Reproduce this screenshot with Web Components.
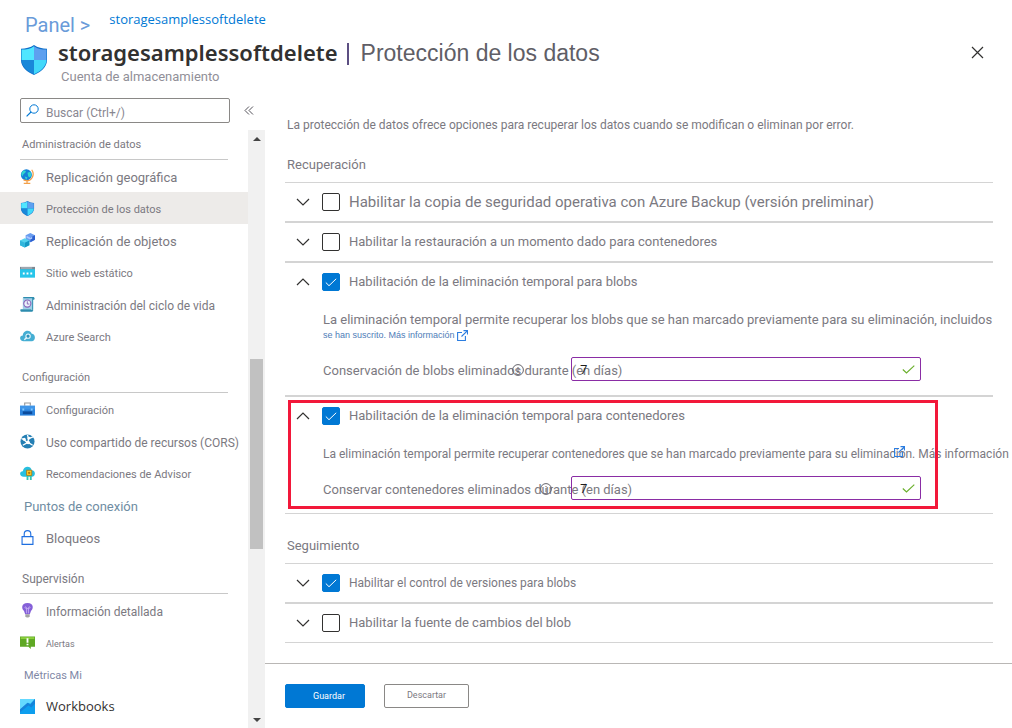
<!DOCTYPE html>
<html lang="es">
<head>
<meta charset="utf-8">
<meta name="viewport" content="width=device-width, initial-scale=1">
<title>storagesamplessoftdelete | Protección de los datos</title>
<style>
  :root {
    --text: #7b7981;
    --dark: #323130;
    --blue: #0078d4;
    --line: #d4d4d4;
    --font-ui: "Open Sans", "Noto Sans", sans-serif;
    --font-alt: "Liberation Sans", Arial, sans-serif;
  }
  body {
    margin: 0;
    background: #fff;
    color: var(--text);
    font-family: Roboto, "Liberation Sans", sans-serif;
    font-size: 13px;
    line-height: 16px;
    overflow: hidden;
  }
</style>
</head>
<body>
<storage-blade>
  <blade-header slot="header"></blade-header>

  <side-nav slot="nav">
    <nav-group heading="Administración de datos" size="11">
      <nav-item icon="globe" size="13">Replicación geográfica</nav-item>
      <nav-item icon="shield" size="11" selected>Protección de los datos</nav-item>
      <nav-item icon="cubes" size="13">Replicación de objetos</nav-item>
      <nav-item icon="web" size="11">Sitio web estático</nav-item>
      <nav-item icon="scroll" size="12">Administración del ciclo de vida</nav-item>
      <nav-item icon="cloudsearch" size="11">Azure Search</nav-item>
    </nav-group>
    <nav-group heading="Configuración" size="11">
      <nav-item icon="toolbox" size="11">Configuración</nav-item>
      <nav-item icon="cors" size="12">Uso compartido de recursos (CORS)</nav-item>
      <nav-item icon="advisor" size="11">Recomendaciones de Advisor</nav-item>
      <nav-item size="13" tone="#6f8da3">Puntos de conexión</nav-item>
      <nav-item icon="lock" size="13">Bloqueos</nav-item>
    </nav-group>
    <nav-group heading="Supervisión" size="12">
      <nav-item icon="bulb" size="12">Información detallada</nav-item>
      <nav-item icon="alert" size="9">Alertas</nav-item>
      <nav-item size="11" tone="#7f88a6">Métricas Mi</nav-item>
      <nav-item icon="workbooks" size="13" strong>Workbooks</nav-item>
    </nav-group>
  </side-nav>

  <protection-form slot="content">
    <p slot="intro">La protección de datos ofrece opciones para recuperar los datos cuando se modifican o eliminan por error.</p>
    <option-group heading="Recuperación">
      <option-row label="Habilitar la copia de seguridad operativa con Azure Backup (versión preliminar)" size="15"></option-row>
      <option-row label="Habilitar la restauración a un momento dado para contenedores"></option-row>
      <option-row label="Habilitación de la eliminación temporal para blobs" checked open>
        <option-note more="se han suscrito. Más información" size="13">La eliminación temporal permite recuperar los blobs que se han marcado previamente para su eliminación, incluidos</option-note>
        <days-field label="Conservación de blobs eliminados durante (en días)" value="7" style="--info: 189px"></days-field>
      </option-row>
      <option-row label="Habilitación de la eliminación temporal para contenedores" checked open callout>
        <option-note size="12">La eliminación temporal permite recuperar contenedores que se han marcado previamente para su eliminación. Más información</option-note>
        <days-field label="Conservar contenedores eliminados durante (en días)" value="7" style="--info: 217px"></days-field>
      </option-row>
    </option-group>
    <option-group heading="Seguimiento">
      <option-row label="Habilitar el control de versiones para blobs" size="12" checked></option-row>
      <option-row label="Habilitar la fuente de cambios del blob"></option-row>
    </option-group>
  </protection-form>

  <action-bar slot="footer"></action-bar>
</storage-blade>

<script>
const icons = {
  shield: `<path fill="#0f6fc9" d="M8 0c2 1.400 4.500 2 7 2v6c0 4-3.500 6.500-7 8-3.500-1.500-7-4-7-8V2c2.500 0 5-.6 7-2z"/>
    <path fill="#50e6ff" d="M8 .6v7.400H1.300V2.400C4 2.400 6 2 8 .6z"/><path fill="#5ea0ef" d="M8 .6v7.400h6.700V2.400C12 2.400 10 2 8 .6z"/>
    <path fill="#1988d9" d="M8 8v7.600C4.500 14 1.300 11.500 1.300 8z"/><path fill="#42d8fa" d="M8 8v7.600c3.500-1.600 6.700-4.100 6.700-7.600z"/>`,
  globe: `<circle cx="6.800" cy="6.200" r="5.900" fill="#1580d8"/><path fill="#2fd5cf" d="M3 2c2-1 4 0 3 1.500S3.500 5 3 7 1.500 6 1.300 5zM8 4l3-1 1.300 3-1.500 3-2-1zM5 8l3 1-1.500 2.700z"/>
    <path d="M12.500.8c3.700 5.500 0 11.700-5.500 11.700-1.500 0-2.500-.4-3.200-1" fill="none" stroke="#f2a04a" stroke-width="1.300"/><path d="M7.500 12.500V15M4 15.300h7" stroke="#f2a04a" stroke-width="1.300"/>`,
  cubes: `<path fill="#6a9df0" d="M11 0l5 2.300v5L11 9.800 6 7.300v-5z"/><path fill="#2c60cf" d="M11 4.800l5-2.500v5l-5 2.500z"/><path fill="#a9c8ff" d="M7 3l4 2 2-1v2l-2 1-4-2z"/>
    <path fill="#54d3ee" d="M5 5.500L10 8v5l-5 2.500L0 13V8z"/><path fill="#1598c4" d="M5 10.500L10 8v5l-5 2.500z"/><path fill="#30b6dc" d="M5 10.500L0 8v5l5 2.500z"/>`,
  web: `<path fill="#28c5ea" d="M0 4h16v9.500H0z"/><path fill="#7c8791" d="M0 2h16v2.500H0z"/><path fill="#d8dde0" d="M1 2.800h12v.8H1z"/><path fill="#fff" d="M3 8h2v2H3zM7 8h2v2H7zM11 8h2v2h-2z"/>`,
  scroll: `<path fill="#9fd0e8" d="M3 1h11v12H3z"/><path fill="#2d8cae" d="M3 0h11c2 0 2 3 .6 3H13V1.300H4zM1 13h11c1 0 1 2.800 2 2.800H2c-2 0-2-2.800-1-2.800zM13 3h1v12h-1z"/>
    <circle cx="7.800" cy="7" r="3.800" fill="#e9f2fb" stroke="#8a63b8" stroke-width="1.200"/><path d="M7.800 4.500V7.500H10" fill="none" stroke="#8a63b8"/>`,
  cloudsearch: `<path fill="#45aed3" d="M4 13c-5 0-5-6-1-6 0-6 8-7 9.500-2 4.500 0 4.500 8 0 8z"/><circle cx="8.600" cy="7.600" r="2.300" fill="#2b90ba" stroke="#e6f6fc" stroke-width="1.200"/><path d="M7 9.300L4.600 11.500" stroke="#e6f6fc" stroke-width="1.500"/>`,
  toolbox: `<path d="M5 4V1h6v3" fill="none" stroke="#9a9a9a" stroke-width="1.200"/><path fill="#3f95e8" d="M0 3.800h16v5H0z"/><path fill="#2b83dd" d="M0 8h16v6.500H0z"/><path fill="#0b4b9c" d="M3 10h10v3H3z"/><path fill="#82c7ff" d="M2.500 7h2v2h-2zM11.500 7h2v2h-2z"/>`,
  cors: `<circle cx="8" cy="8" r="7.500" fill="#247fb4"/><path d="M1.500 5c4 0 4 4 7 4M8 1l1 4 5-2M8.500 9l5 3M8.500 9L3 12M9 5L8.500 9" stroke="#fff" stroke-width="1.400" fill="none"/><circle cx="4.500" cy="5.500" r="1.600" fill="#fff"/><circle cx="8.700" cy="9" r="1.900" fill="#fff"/><circle cx="9.500" cy="4.500" r="1.500" fill="#fff"/>`,
  advisor: `<path fill="#27bfe0" d="M4 11.500c-5 0-5-6-1-6 1-6 8.500-6 9.500-1 4.500 0 4.500 7 0 7z"/><path fill="#32c8b6" d="M7 9h2v6H7zM10.500 9h2v6h-2z"/><path fill="#ffcb27" stroke="#a7730c" stroke-width=".8" d="M7 4.500h5.500V10H7z"/><circle cx="9.800" cy="7.300" r="1.300" fill="#b87907"/>`,
  lock: `<path d="M4.500 7V4.200a3.500 3.500 0 017 0V7M2.200 7h11.600v8.300H2.200z" fill="none" stroke="#1f6fe0" stroke-width="1.200"/>`,
  bulb: `<path fill="#8560d8" d="M8 0c7 0 6.500 6.500 3.700 8.500L10.500 12h-5L4.300 8.500C1.500 6.500 1 0 8 0z"/><path d="M7 11V6C5 6 5 4 6 4s1 2 1 2h2s0-2 1-2 1 2-1 2v5" fill="none" stroke="#cdb9f5" stroke-width=".8"/><path fill="#a3a3a3" d="M5.700 12h4.600v2L9 15.500H7L5.700 14z"/>`,
  alert: `<path fill="#5fa824" d="M0 1.500h16v11h-4.500V15L9 12.500H0z"/><path fill="#8bd03c" d="M.8 2.300h14.400v2H.8z"/><path fill="#fff" d="M7 3.500h2v4.700H7zM7 9.300h2v1.700H7z"/>`,
  workbooks: `<path fill="#0d9eee" d="M0 0h16v16H0z"/><path fill="#64d9ff" d="M0 0h16L11 5 8.500 4 0 12z"/><path fill="#1683da" d="M16 0v5l-4 4-3-2-9 7v-3l8-7 3 2z"/>`
};

const chevron = `<svg width="14" height="8" viewBox="0 0 14 8"><path d="M1 1l6 6 6-6" fill="none" stroke="#323130" stroke-width="1.200"/></svg>`;
const external = `<svg width="11" height="11" viewBox="0 0 11 11"><path d="M5 2.500H.6v8h7.800V6M6.500.6h4v4M10.300.8L4.500 6.500" fill="none" stroke="#2b7de0" stroke-width="1.100"/></svg>`;

class StorageBlade extends HTMLElement {
  constructor() {
    super();
    this.attachShadow({ mode: "open" }).innerHTML = `
      <style>
        :host {
          display: grid;
          grid-template-columns: 265px minmax(0, 1fr);
          grid-template-rows: 98px 1fr auto;
          grid-template-areas: "header header" "nav content" "nav footer";
          height: 100vh;
          overflow: hidden;
        }
        header { grid-area: header; }
        aside { grid-area: nav; min-height: 0; }
        main { grid-area: content; min-height: 0; overflow: hidden; }
        footer { grid-area: footer; }
      </style>
      <header><slot name="header"></slot></header>
      <aside><slot name="nav"></slot></aside>
      <main><slot name="content"></slot></main>
      <footer><slot name="footer"></slot></footer>`;
  }
}

class BladeHeader extends HTMLElement {
  constructor() {
    super();
    this.attachShadow({ mode: "open" }).innerHTML = `
      <style>
        :host { display: block; padding: 10px 28px 0 21px; }
        nav { display: flex; gap: 19px; height: 28px; padding-left: 4px; }
        a { color: var(--blue); text-decoration: none; font: 13px/18px var(--font-ui); }
        a.root { color: #699bd9; font: 20px/30px Roboto, sans-serif; }
        .bar { display: flex; align-items: flex-start; }
        .shield { width: 26px; height: 30px; margin: 7px 11px 0 0; }
        .titles { flex: 1; }
        h1 { display: flex; gap: 9px; margin: 0; color: var(--dark); font: 600 22px/28px "Noto Sans", var(--font-ui); white-space: nowrap; }
        h1 i { width: 2px; height: 22px; margin-top: 5px; background: #5c4f82; }
        h1 small { color: #605e66; font: 23px/30px var(--font-alt); margin-left: 3px; }
        p { margin: 1px 0 0 3px; line-height: 16px; color: #918f98; }
        button { border: 0; padding: 0; background: none; width: 13px; height: 13px; margin-top: 8px; }
        svg { display: block; }
      </style>
      <nav aria-label="Ruta">
        <a class="root" href="#panel">Panel &gt;</a>
        <a href="#cuenta">storagesamplessoftdelete</a>
      </nav>
      <div class="bar">
        <svg class="shield" viewBox="1 0 14 16" preserveAspectRatio="none">${icons.shield}</svg>
        <div class="titles">
          <h1>storagesamplessoftdelete <i></i> <small>Protección de los datos</small></h1>
          <p>Cuenta de almacenamiento</p>
        </div>
        <button aria-label="Cerrar"><svg width="13" height="13" viewBox="0 0 13 13"><path d="M1 1l11 11M12 1L1 12" stroke="#323130" stroke-width="1.200"/></svg></button>
      </div>`;
  }
}

class SideNav extends HTMLElement {
  constructor() {
    super();
    this.attachShadow({ mode: "open" }).innerHTML = `
      <style>
        :host { display: flex; flex-direction: column; height: 100%; }
        .search { display: flex; align-items: center; gap: 14px; flex: none; height: 25px; padding-left: 20px; margin-bottom: 7px; }
        label { display: flex; align-items: center; gap: 7px; box-sizing: border-box; width: 210px; height: 25px; padding: 0 5px; border: 1px solid #8a8886; border-radius: 2px; }
        input { flex: 1; min-width: 0; border: 0; outline: 0; padding: 4px 0 0; background: none; font: 12px/16px Roboto, sans-serif; color: var(--text); }
        input::placeholder { color: #898791; opacity: 1; }
        button { border: 0; padding: 0; background: none; }
        svg { display: block; flex: none; }
        .body { display: flex; flex: 1; min-height: 0; }
        nav { flex: 1; min-width: 0; overflow: hidden; }
        .track { display: grid; grid-template-rows: 17px 212px 190px 1fr 17px; justify-items: center; align-items: center; width: 17px; background: #f1f1f1; }
        .thumb { grid-row: 3; width: 13px; height: 100%; background: #c1c1c1; }
        .down { grid-row: 5; }
      </style>
      <div class="search">
        <label>
          <svg width="13" height="13" viewBox="0 0 13 13"><circle cx="8" cy="5" r="4.200" fill="none" stroke="#0078d4"/><path d="M5 8L.6 12.400" stroke="#0078d4" stroke-width="1.200"/></svg>
          <input type="text" placeholder="Buscar (Ctrl+/)" aria-label="Buscar">
        </label>
        <button aria-label="Contraer"><svg width="10" height="9" viewBox="0 0 10 9"><path d="M5 .5l-4 4 4 4M9 .5l-4 4 4 4" fill="none" stroke="#55535a"/></svg></button>
      </div>
      <div class="body">
        <nav><slot></slot></nav>
        <div class="track">
          <svg width="8" height="4" viewBox="0 0 8 4"><path d="M0 4l4-4 4 4z" fill="#444"/></svg>
          <div class="thumb"></div>
          <svg class="down" width="8" height="4" viewBox="0 0 8 4"><path d="M0 0l4 4 4-4z" fill="#444"/></svg>
        </div>
      </div>`;
  }
}

class NavGroup extends HTMLElement {
  connectedCallback() {
    this.attachShadow({ mode: "open" }).innerHTML = `
      <style>
        :host { display: block; padding-top: 11px; }
        :host(:first-of-type) { padding-top: 0; }
        h2 { margin: 0 20px; padding: 7px 2px 6px; border-bottom: 1px solid #c8c8c8; font-size: ${this.getAttribute("size")}px; font-weight: 400; line-height: 16px; }
      </style>
      <h2>${this.getAttribute("heading")}</h2>
      <slot></slot>`;
  }
}

class NavItem extends HTMLElement {
  connectedCallback() {
    const icon = icons[this.getAttribute("icon")];
    this.attachShadow({ mode: "open" }).innerHTML = `
      <style>
        :host { display: block; }
        :host([selected]) { background: #edebe9; }
        a { display: flex; align-items: center; gap: 11px; height: 32px; padding-left: ${icon ? 20 : 24}px; color: ${this.getAttribute("tone") || "inherit"}; font-size: ${this.getAttribute("size")}px; text-decoration: none; white-space: nowrap; }
        :host([strong]) a { color: var(--dark); font-family: var(--font-ui); }
        svg { flex: none; }
        span { padding-top: 4px; }
        :host([strong]) span { padding-top: 0; }
      </style>
      <a href="#">${icon ? `<svg width="15" height="15" viewBox="0 0 16 16">${icon}</svg>` : ""}<span><slot></slot></span></a>`;
  }
}

class ProtectionForm extends HTMLElement {
  constructor() {
    super();
    this.attachShadow({ mode: "open" }).innerHTML = `
      <style>
        :host { display: block; padding: 19px 19px 0 20px; }
        ::slotted(p) { margin: 0 0 0 2px; font-size: 12px; white-space: nowrap; }
      </style>
      <slot name="intro"></slot>
      <slot></slot>`;
  }
}

class OptionGroup extends HTMLElement {
  connectedCallback() {
    this.attachShadow({ mode: "open" }).innerHTML = `
      <style>
        :host { display: block; padding-top: 23px; }
        h2 { margin: 0 0 0 2px; font-size: 13px; font-weight: 400; line-height: 18px; }
        .rows { margin-top: 8px; border-top: 1px solid var(--line); border-bottom: 1px solid var(--line); }
      </style>
      <h2>${this.getAttribute("heading")}</h2>
      <div class="rows"><slot></slot></div>`;
  }
}

class OptionRow extends HTMLElement {
  connectedCallback() {
    const checked = this.hasAttribute("checked") ? "checked" : "";
    this.attachShadow({ mode: "open" }).innerHTML = `
      <style>
        :host { display: block; position: relative; }
        :host(:not(:last-of-type)) { border-bottom: 2px solid var(--line); }
        .head { display: flex; align-items: center; height: 38px; padding-left: 11px; }
        button { border: 0; padding: 0; background: none; width: 14px; height: 8px; margin-right: 12px; }
        :host([open]) button { transform: rotate(180deg); }
        svg { display: block; }
        .box { display: grid; place-items: center; width: 18px; height: 18px; margin-right: 9px; }
        .box > * { grid-area: 1 / 1; }
        .box svg { pointer-events: none; visibility: hidden; z-index: 1; }
        input { appearance: none; width: 18px; height: 18px; margin: 0; border: 1px solid #323130; border-radius: 2px; background: #fff; }
        input:checked { background: var(--blue); border-color: var(--blue); }
        input:checked + svg { visibility: visible; }
        label { font-size: ${this.getAttribute("size") || 13}px; white-space: nowrap; }
        .body { display: none; }
        :host([open]) .body { display: block; padding: 11px 0 14px 38px; }
        :host([callout]) .body { padding-bottom: 13px; }
        :host([callout])::after { content: ""; position: absolute; inset: 3px 55px 4px 3px; border: 3px solid #f2183a; pointer-events: none; }
      </style>
      <div class="head">
        <button aria-label="Expandir">${chevron}</button>
        <span class="box">
          <input type="checkbox" id="opt" ${checked}>
          <svg width="12" height="9" viewBox="0 0 12 9"><path d="M.8 4.500l3.200 3.200L11.200.8" fill="none" stroke="#fff"/></svg>
        </span>
        <label for="opt">${this.getAttribute("label")}</label>
      </div>
      <div class="body"><slot></slot></div>`;
  }
}

class OptionNote extends HTMLElement {
  connectedCallback() {
    const more = this.getAttribute("more");
    this.attachShadow({ mode: "open" }).innerHTML = `
      <style>
        :host { display: block; position: relative; margin-bottom: 14px; font-size: ${this.getAttribute("size")}px; white-space: nowrap; }
        a { display: flex; align-items: center; gap: 2px; color: #4f7db8; font: 9px/15px var(--font-alt); text-decoration: none; }
        .over { position: absolute; left: 571px; top: 0; }
        svg { display: block; }
      </style>
      <slot></slot>
      ${more ? `<a href="#">${more}${external}</a>` : `<a class="over" href="#" aria-label="Más información">${external}</a>`}`;
  }
}

class DaysField extends HTMLElement {
  connectedCallback() {
    this.attachShadow({ mode: "open" }).innerHTML = `
      <style>
        :host { display: grid; grid-template-columns: 248px minmax(0, 350px); position: relative; align-items: center; }
        label { width: 0; padding-top: 3px; white-space: nowrap; }
        .info { position: absolute; left: var(--info); top: 7px; }
        .field { display: grid; align-items: center; position: relative; }
        .field > * { grid-area: 1 / 1; }
        input { box-sizing: border-box; width: 100%; height: 24px; margin: 0; padding: 0 8px; border: 1px solid #8a2da5; border-radius: 2px; background: none; color: #201f1e; font: 13px/18px var(--font-ui); outline: 0; }
        .ok { justify-self: end; margin-right: 6px; }
      </style>
      <label for="days">${this.getAttribute("label")}</label>
      <svg class="info" width="12" height="12" viewBox="0 0 12 12"><circle cx="6" cy="6" r="5.400" fill="none" stroke="#66646c"/><path d="M6 5v4M6 3v1" stroke="#66646c"/></svg>
      <span class="field">
        <input id="days" type="text" value="${this.getAttribute("value")}">
        <svg class="ok" width="13" height="9" viewBox="0 0 13 9"><path d="M.8 4.500L4.500 8 12.300.6" fill="none" stroke="#6bb02d" stroke-width="1.200"/></svg>
      </span>`;
  }
}

class ActionBar extends HTMLElement {
  constructor() {
    super();
    this.attachShadow({ mode: "open" }).innerHTML = `
      <style>
        :host { display: flex; gap: 19px; padding: 20px 20px; border-top: 1px solid #b9b7b5; }
        button { box-sizing: border-box; width: 85px; height: 24px; padding: 0 0 2px; border: 1px solid #8a8886; border-radius: 2px; background: #fff; color: var(--text); font: 9px/16px Roboto, sans-serif; }
        .primary { width: 80px; padding: 0 0 0 8px; border-color: var(--blue); background: var(--blue); color: #fff; }
      </style>
      <button class="primary">Guardar</button>
      <button>Descartar</button>`;
  }
}

customElements.define("storage-blade", StorageBlade);
customElements.define("blade-header", BladeHeader);
customElements.define("side-nav", SideNav);
customElements.define("nav-group", NavGroup);
customElements.define("nav-item", NavItem);
customElements.define("protection-form", ProtectionForm);
customElements.define("option-group", OptionGroup);
customElements.define("option-row", OptionRow);
customElements.define("option-note", OptionNote);
customElements.define("days-field", DaysField);
customElements.define("action-bar", ActionBar);
</script>
</body>
</html>
